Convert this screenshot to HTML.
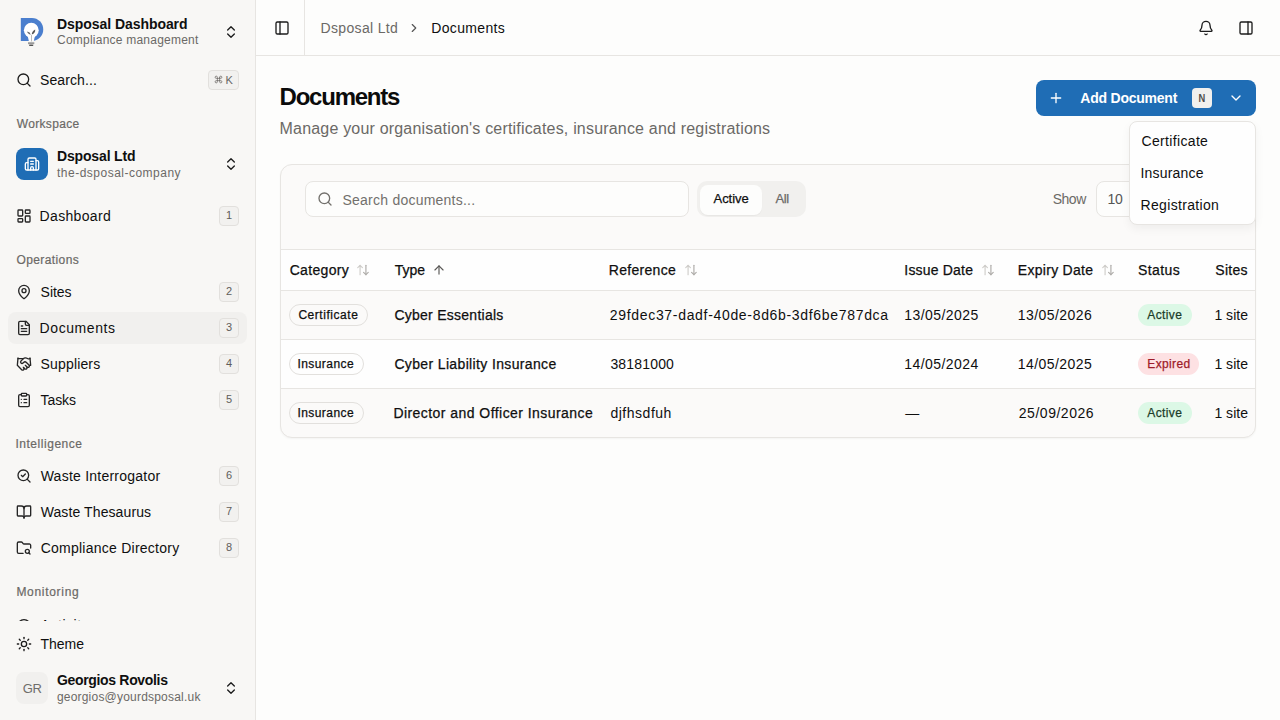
<!DOCTYPE html>
<html><head><meta charset="utf-8">
<style>
*{box-sizing:border-box;margin:0;padding:0}
html,body{width:1280px;height:720px;overflow:hidden;background:#fdfdfc;font-family:"Liberation Sans",sans-serif;color:#0f0f0f}
.t{position:absolute;white-space:nowrap;line-height:normal}
.b{position:absolute}
.ic{position:absolute;display:block;fill:none;stroke:currentColor;stroke-linecap:round;stroke-linejoin:round}
</style></head><body>
<div class="b" style="left:0px;top:0px;width:255px;height:720px;background:#f8f7f5"></div>
<div class="b" style="left:255px;top:0px;width:1px;height:720px;background:#e7e5e2"></div>
<div class="b" style="left:256px;top:55px;width:1024px;height:1px;background:#e7e5e2"></div>
<div class="b" style="left:304px;top:0px;width:1px;height:55px;background:#e7e5e2"></div>
<svg class="ic" style="left:18px;top:15px" width="28" height="33" viewBox="0 0 28 33">
<path d="M2.8 3 H14 A11 11.2 0 0 1 14 25.9 H2.8 Z" fill="#4b7fce" stroke="none"/>
<circle cx="13.3" cy="15.2" r="7.4" fill="#fff" stroke="none"/>
<path d="M8.2 18.5 Q10.5 22 10.8 26 H15.8 Q16.2 22 18.4 18.5 Z" fill="#fff" stroke="none"/>
<path d="M10 27.2 h6.3 v1.8 q-3.2 1.4 -6.3 0z" fill="#9a9a9a" stroke="none"/>
<rect x="11.2" y="29.8" width="4" height="1.2" fill="#555" stroke="none"/>
<path d="M13.5 26 V20.5" stroke="#aaa" stroke-width="0.8"/>
<path d="M12.8 19.8 Q12.2 17.2 9.2 16.6 Q9.6 19.2 12.8 19.8Z" fill="#666" stroke="none"/>
<path d="M13.8 19.6 Q13.8 16.2 17.2 14.4 Q17.6 18.0 13.8 19.6Z" fill="#555" stroke="none"/>
</svg>
<svg class="ic" style="left:223px;top:24px;color:#1c1c1c;" width="16" height="16" viewBox="0 0 24 24" stroke-width="2"><path d="m7 15 5 5 5-5"/><path d="m7 9 5-5 5 5"/></svg>
<svg class="ic" style="left:16px;top:72px;color:#1c1c1c;" width="16" height="16" viewBox="0 0 24 24" stroke-width="2"><circle cx="11" cy="11" r="8"/><path d="m21 21-4.3-4.3"/></svg>
<div class="b" style="left:208px;top:70px;width:31px;height:20px;border:1px solid #e2e0dd;background:#f2f1ef;border-radius:4px"></div>
<svg class="ic" style="left:214.0px;top:75.0px;color:#5f5d5a;" width="9" height="9" viewBox="0 0 24 24" stroke-width="1.8"><path d="M15 6v12a3 3 0 1 0 3-3H6a3 3 0 1 0 3 3V6a3 3 0 1 0-3 3h12a3 3 0 1 0-3-3"/></svg>
<div class="t" style="left:225.5px;top:73.5px;font-size:11px;color:#666">K</div>
<div class="b" style="left:16px;top:148px;width:32px;height:32px;background:#1f6db5;border-radius:8px"></div>
<svg class="ic" style="left:24px;top:156px;color:#ffffff;" width="16" height="16" viewBox="0 0 24 24" stroke-width="2"><path d="M10 12h4"/><path d="M10 8h4"/><path d="M14 21v-3a2 2 0 0 0-4 0v3"/><path d="M6 10H4a2 2 0 0 0-2 2v7a2 2 0 0 0 2 2h16a2 2 0 0 0 2-2V9a2 2 0 0 0-2-2h-2"/><path d="M6 21V5a2 2 0 0 1 2-2h8a2 2 0 0 1 2 2v16"/></svg>
<svg class="ic" style="left:223px;top:156px;color:#1c1c1c;" width="16" height="16" viewBox="0 0 24 24" stroke-width="2"><path d="m7 15 5 5 5-5"/><path d="m7 9 5-5 5 5"/></svg>
<div class="b" style="left:8px;top:312px;width:239px;height:32px;background:#f1f0ee;border-radius:8px"></div>
<svg class="ic" style="left:16px;top:208px;color:#262626;" width="16" height="16" viewBox="0 0 24 24" stroke-width="2"><rect width="7" height="9" x="3" y="3" rx="1"/><rect width="7" height="5" x="14" y="3" rx="1"/><rect width="7" height="9" x="14" y="12" rx="1"/><rect width="7" height="5" x="3" y="16" rx="1"/></svg>
<div class="b" style="left:219px;top:206px;width:20px;height:20px;border:1px solid #e2e0dd;background:#f2f1ef;border-radius:4px"></div>
<div class="t" style="left:219px;top:209px;width:20px;text-align:center;font-size:11px;color:#5f5d5a">1</div>
<svg class="ic" style="left:16px;top:284px;color:#262626;" width="16" height="16" viewBox="0 0 24 24" stroke-width="2"><path d="M20 10c0 4.993-5.539 10.193-7.399 11.799a1 1 0 0 1-1.202 0C9.539 20.193 4 14.993 4 10a8 8 0 0 1 16 0"/><circle cx="12" cy="10" r="3"/></svg>
<div class="b" style="left:219px;top:282px;width:20px;height:20px;border:1px solid #e2e0dd;background:#f2f1ef;border-radius:4px"></div>
<div class="t" style="left:219px;top:285px;width:20px;text-align:center;font-size:11px;color:#5f5d5a">2</div>
<svg class="ic" style="left:16px;top:320px;color:#262626;" width="16" height="16" viewBox="0 0 24 24" stroke-width="2"><path d="M15 2H6a2 2 0 0 0-2 2v16a2 2 0 0 0 2 2h12a2 2 0 0 0 2-2V7Z"/><path d="M14 2v4a2 2 0 0 0 2 2h4"/><path d="M10 9H8"/><path d="M16 13H8"/><path d="M16 17H8"/></svg>
<div class="b" style="left:219px;top:318px;width:20px;height:20px;border:1px solid #e2e0dd;background:#f2f1ef;border-radius:4px"></div>
<div class="t" style="left:219px;top:321px;width:20px;text-align:center;font-size:11px;color:#5f5d5a">3</div>
<svg class="ic" style="left:16px;top:356px;color:#262626;" width="16" height="16" viewBox="0 0 24 24" stroke-width="2"><path d="m11 17 2 2a1 1 0 1 0 3-3"/><path d="m14 14 2.5 2.5a1 1 0 1 0 3-3l-3.88-3.88a3 3 0 0 0-4.24 0l-.88.88a1 1 0 1 1-3-3l2.81-2.81a5.79 5.79 0 0 1 7.06-.87l.47.28a2 2 0 0 0 1.42.25L21 4"/><path d="m21 3 1 11h-2"/><path d="M3 3 2 14l6.5 6.5a1 1 0 1 0 3-3"/><path d="M3 4h8"/></svg>
<div class="b" style="left:219px;top:354px;width:20px;height:20px;border:1px solid #e2e0dd;background:#f2f1ef;border-radius:4px"></div>
<div class="t" style="left:219px;top:357px;width:20px;text-align:center;font-size:11px;color:#5f5d5a">4</div>
<svg class="ic" style="left:16px;top:392px;color:#262626;" width="16" height="16" viewBox="0 0 24 24" stroke-width="2"><rect width="8" height="4" x="8" y="2" rx="1" ry="1"/><path d="M16 4h2a2 2 0 0 1 2 2v14a2 2 0 0 1-2 2H6a2 2 0 0 1-2-2V6a2 2 0 0 1 2-2h2"/><path d="M12 11h4"/><path d="M12 16h4"/><path d="M8 11h.01"/><path d="M8 16h.01"/></svg>
<div class="b" style="left:219px;top:390px;width:20px;height:20px;border:1px solid #e2e0dd;background:#f2f1ef;border-radius:4px"></div>
<div class="t" style="left:219px;top:393px;width:20px;text-align:center;font-size:11px;color:#5f5d5a">5</div>
<svg class="ic" style="left:16px;top:468px;color:#262626;" width="16" height="16" viewBox="0 0 24 24" stroke-width="2"><path d="m8 11 2 2 4-4"/><circle cx="11" cy="11" r="8"/><path d="m21 21-4.3-4.3"/></svg>
<div class="b" style="left:219px;top:466px;width:20px;height:20px;border:1px solid #e2e0dd;background:#f2f1ef;border-radius:4px"></div>
<div class="t" style="left:219px;top:469px;width:20px;text-align:center;font-size:11px;color:#5f5d5a">6</div>
<svg class="ic" style="left:16px;top:504px;color:#262626;" width="16" height="16" viewBox="0 0 24 24" stroke-width="2"><path d="M12 7v14"/><path d="M3 18a1 1 0 0 1-1-1V4a1 1 0 0 1 1-1h5a4 4 0 0 1 4 4 4 4 0 0 1 4-4h5a1 1 0 0 1 1 1v13a1 1 0 0 1-1 1h-6a3 3 0 0 0-3 3 3 3 0 0 0-3-3z"/></svg>
<div class="b" style="left:219px;top:502px;width:20px;height:20px;border:1px solid #e2e0dd;background:#f2f1ef;border-radius:4px"></div>
<div class="t" style="left:219px;top:505px;width:20px;text-align:center;font-size:11px;color:#5f5d5a">7</div>
<svg class="ic" style="left:16px;top:540px;color:#262626;" width="16" height="16" viewBox="0 0 24 24" stroke-width="2"><circle cx="17" cy="17" r="3"/><path d="M10.7 20H4a2 2 0 0 1-2-2V5a2 2 0 0 1 2-2h3.9a2 2 0 0 1 1.69.9l.81 1.2a2 2 0 0 0 1.67.9H20a2 2 0 0 1 2 2v4.1"/><path d="m21 21-1.9-1.9"/></svg>
<div class="b" style="left:219px;top:538px;width:20px;height:20px;border:1px solid #e2e0dd;background:#f2f1ef;border-radius:4px"></div>
<div class="t" style="left:219px;top:541px;width:20px;text-align:center;font-size:11px;color:#5f5d5a">8</div>
<svg class="ic" style="left:16px;top:617.5px;color:#1c1c1c;" width="16" height="16" viewBox="0 0 24 24" stroke-width="2"><circle cx="12" cy="12" r="9.5"/></svg>
<div class="t" style="left:57.00px;top:16.00px;font-size:14px;color:#0f0f0f;font-weight:bold;letter-spacing:-0.058px;">Dsposal Dashboard</div>
<div class="t" style="left:57.00px;top:33.40px;font-size:12px;color:#6b6966;letter-spacing:0.230px;">Compliance management</div>
<div class="t" style="left:40.00px;top:72.00px;font-size:14px;color:#0f0f0f;letter-spacing:0.108px;">Search...</div>
<div class="t" style="left:16.75px;top:116.50px;font-size:12px;color:#6b6966;-webkit-text-stroke:0.2px #6b6966;letter-spacing:0.328px;">Workspace</div>
<div class="t" style="left:57.00px;top:148.00px;font-size:14px;color:#0f0f0f;font-weight:bold;letter-spacing:-0.157px;">Dsposal Ltd</div>
<div class="t" style="left:57.00px;top:165.90px;font-size:12px;color:#6b6966;letter-spacing:0.493px;">the-dsposal-company</div>
<div class="t" style="left:39.60px;top:208.00px;font-size:14px;color:#0f0f0f;letter-spacing:0.337px;">Dashboard</div>
<div class="t" style="left:16.50px;top:252.50px;font-size:12px;color:#6b6966;-webkit-text-stroke:0.2px #6b6966;letter-spacing:0.395px;">Operations</div>
<div class="t" style="left:40.60px;top:284.25px;font-size:14px;color:#0f0f0f;letter-spacing:-0.031px;">Sites</div>
<div class="t" style="left:39.60px;top:319.75px;font-size:14px;color:#0f0f0f;letter-spacing:0.574px;">Documents</div>
<div class="t" style="left:40.60px;top:356.10px;font-size:14px;color:#0f0f0f;letter-spacing:0.154px;">Suppliers</div>
<div class="t" style="left:40.60px;top:391.70px;font-size:14px;color:#0f0f0f;letter-spacing:-0.097px;">Tasks</div>
<div class="t" style="left:15.40px;top:436.80px;font-size:12px;color:#6b6966;-webkit-text-stroke:0.2px #6b6966;letter-spacing:0.538px;">Intelligence</div>
<div class="t" style="left:40.70px;top:468.10px;font-size:14px;color:#0f0f0f;letter-spacing:0.238px;">Waste Interrogator</div>
<div class="t" style="left:40.70px;top:504.00px;font-size:14px;color:#0f0f0f;letter-spacing:0.101px;">Waste Thesaurus</div>
<div class="t" style="left:40.70px;top:540.10px;font-size:14px;color:#0f0f0f;letter-spacing:0.246px;">Compliance Directory</div>
<div class="t" style="left:16.40px;top:585.10px;font-size:12px;color:#6b6966;-webkit-text-stroke:0.2px #6b6966;letter-spacing:0.700px;">Monitoring</div>
<div class="t" style="left:40.60px;top:616.50px;font-size:14px;color:#0f0f0f;letter-spacing:0.523px;">Activity</div>
<div class="b" style="left:0px;top:620.5px;width:255px;height:99.5px;background:#f8f7f5"></div>
<svg class="ic" style="left:16px;top:636px;color:#1c1c1c;" width="16" height="16" viewBox="0 0 24 24" stroke-width="2"><circle cx="12" cy="12" r="4"/><path d="M12 2v2"/><path d="M12 20v2"/><path d="m4.93 4.93 1.41 1.41"/><path d="m17.66 17.66 1.41 1.41"/><path d="M2 12h2"/><path d="M20 12h2"/><path d="m6.34 17.66-1.41 1.41"/><path d="m19.07 4.93-1.41 1.41"/></svg>
<div class="b" style="left:16px;top:672px;width:32px;height:32px;background:#f1f0ee;border-radius:8px"></div>
<svg class="ic" style="left:223px;top:680px;color:#1c1c1c;" width="16" height="16" viewBox="0 0 24 24" stroke-width="2"><path d="m7 15 5 5 5-5"/><path d="m7 9 5-5 5 5"/></svg>
<div class="t" style="left:40.50px;top:635.70px;font-size:14px;color:#0f0f0f;letter-spacing:-0.022px;">Theme</div>
<div class="t" style="left:22.80px;top:680.80px;font-size:13px;color:#6f6d6a;letter-spacing:-0.412px;">GR</div>
<div class="t" style="left:56.90px;top:672.00px;font-size:14px;color:#0f0f0f;font-weight:bold;letter-spacing:-0.322px;">Georgios Rovolis</div>
<div class="t" style="left:56.90px;top:689.90px;font-size:12px;color:#6b6966;letter-spacing:0.208px;">georgios@yourdsposal.uk</div>
<svg class="ic" style="left:274px;top:20px;color:#1c1c1c;" width="16" height="16" viewBox="0 0 24 24" stroke-width="2"><rect width="18" height="18" x="3" y="3" rx="2"/><path d="M9 3v18"/></svg>
<svg class="ic" style="left:406.8px;top:21px;color:#555555;" width="14" height="14" viewBox="0 0 24 24" stroke-width="2"><path d="m9 18 6-6-6-6"/></svg>
<svg class="ic" style="left:1198px;top:20px;color:#1c1c1c;" width="16" height="16" viewBox="0 0 24 24" stroke-width="2"><path d="M10.268 21a2 2 0 0 0 3.464 0"/><path d="M3.262 15.326A1 1 0 0 0 4 17h16a1 1 0 0 0 .74-1.673C19.41 13.956 18 12.499 18 8A6 6 0 0 0 6 8c0 4.499-1.411 5.956-2.738 7.326"/></svg>
<svg class="ic" style="left:1238px;top:20px;color:#1c1c1c;" width="16" height="16" viewBox="0 0 24 24" stroke-width="2"><rect width="18" height="18" x="3" y="3" rx="2"/><path d="M15 3v18"/></svg>
<div class="b" style="left:1036px;top:80px;width:220px;height:36px;background:#1f6db5;border-radius:8px"></div>
<svg class="ic" style="left:1048px;top:90px;color:#ffffff;" width="16" height="16" viewBox="0 0 24 24" stroke-width="2"><path d="M5 12h14"/><path d="M12 5v14"/></svg>
<div class="b" style="left:1192px;top:88px;width:20px;height:20px;background:#f1f0ee;border-radius:4px"></div>
<div class="t" style="left:1192px;top:92px;width:20px;text-align:center;font-size:11px;color:#4f4d4a;font-weight:bold;transform:scaleX(0.85)">N</div>
<svg class="ic" style="left:1228px;top:90px;color:#ffffff;" width="16" height="16" viewBox="0 0 24 24" stroke-width="2"><path d="m6 9 6 6 6-6"/></svg>
<div class="b" style="left:280px;top:164px;width:976px;height:274px;border:1px solid #e7e5e2;border-radius:12px;overflow:hidden;background:#fbfaf9;box-shadow:0 1px 2px rgba(0,0,0,0.04)"></div>
<div class="b" style="left:281px;top:250px;width:974px;height:40px;background:#fefefe"></div>
<div class="b" style="left:281px;top:249px;width:974px;height:1px;background:#e7e5e2"></div>
<div class="b" style="left:281px;top:290px;width:974px;height:1px;background:#e7e5e2"></div>
<div class="b" style="left:281px;top:340px;width:974px;height:48px;background:#fefefe"></div>
<div class="b" style="left:281px;top:339px;width:974px;height:1px;background:#e7e5e2"></div>
<div class="b" style="left:281px;top:388px;width:974px;height:1px;background:#e7e5e2"></div>
<div class="b" style="left:305px;top:181px;width:384px;height:36px;border:1px solid #e7e5e2;border-radius:8px;background:#fdfdfc"></div>
<svg class="ic" style="left:317px;top:191px;color:#72706c;" width="16" height="16" viewBox="0 0 24 24" stroke-width="2"><circle cx="11" cy="11" r="8"/><path d="m21 21-4.3-4.3"/></svg>
<div class="b" style="left:697px;top:181px;width:109px;height:36px;background:#f1f0ee;border-radius:10px"></div>
<div class="b" style="left:700px;top:185px;width:62px;height:30px;background:#fdfdfc;border-radius:8px;box-shadow:0 1px 1px rgba(0,0,0,0.04)"></div>
<div class="b" style="left:1096px;top:181px;width:120px;height:36px;border:1px solid #e7e5e2;border-radius:8px;background:#fdfdfc"></div>
<svg class="ic" style="left:356px;top:263.3px;color:#cfcdca;" width="14" height="14" viewBox="0 0 24 24" stroke-width="2"><path d="m3 8 4-4 4 4"/><path d="M7 4v16"/></svg>
<svg class="ic" style="left:356px;top:263.3px;color:#aeaca9;" width="14" height="14" viewBox="0 0 24 24" stroke-width="2"><path d="m21 16-4 4-4-4"/><path d="M17 20V4"/></svg>
<svg class="ic" style="left:684px;top:263.3px;color:#cfcdca;" width="14" height="14" viewBox="0 0 24 24" stroke-width="2"><path d="m3 8 4-4 4 4"/><path d="M7 4v16"/></svg>
<svg class="ic" style="left:684px;top:263.3px;color:#aeaca9;" width="14" height="14" viewBox="0 0 24 24" stroke-width="2"><path d="m21 16-4 4-4-4"/><path d="M17 20V4"/></svg>
<svg class="ic" style="left:981px;top:263.3px;color:#cfcdca;" width="14" height="14" viewBox="0 0 24 24" stroke-width="2"><path d="m3 8 4-4 4 4"/><path d="M7 4v16"/></svg>
<svg class="ic" style="left:981px;top:263.3px;color:#aeaca9;" width="14" height="14" viewBox="0 0 24 24" stroke-width="2"><path d="m21 16-4 4-4-4"/><path d="M17 20V4"/></svg>
<svg class="ic" style="left:1101px;top:263.3px;color:#cfcdca;" width="14" height="14" viewBox="0 0 24 24" stroke-width="2"><path d="m3 8 4-4 4 4"/><path d="M7 4v16"/></svg>
<svg class="ic" style="left:1101px;top:263.3px;color:#aeaca9;" width="14" height="14" viewBox="0 0 24 24" stroke-width="2"><path d="m21 16-4 4-4-4"/><path d="M17 20V4"/></svg>
<svg class="ic" style="left:431.6px;top:263.3px;color:#5a5856;" width="14" height="14" viewBox="0 0 24 24" stroke-width="2"><path d="m5 12 7-7 7 7"/><path d="M12 19V5"/></svg>
<div class="b" style="left:289px;top:304px;width:79px;height:22px;border:1px solid #e2e0dd;border-radius:11px"></div>
<div class="b" style="left:289px;top:353px;width:75px;height:22px;border:1px solid #e2e0dd;border-radius:11px"></div>
<div class="b" style="left:289px;top:402px;width:75px;height:22px;border:1px solid #e2e0dd;border-radius:11px"></div>
<div class="b" style="left:1138px;top:304px;width:54px;height:22px;background:#dcf8e6;border-radius:11px"></div>
<div class="b" style="left:1138px;top:353px;width:61px;height:22px;background:#fde1e3;border-radius:11px"></div>
<div class="b" style="left:1138px;top:402px;width:54px;height:22px;background:#dcf8e6;border-radius:11px"></div>
<div class="t" style="left:320.60px;top:19.70px;font-size:14px;color:#6b6966;letter-spacing:0.326px;">Dsposal Ltd</div>
<div class="t" style="left:431.20px;top:19.70px;font-size:14px;color:#0f0f0f;letter-spacing:0.349px;">Documents</div>
<div class="t" style="left:279.60px;top:82.70px;font-size:24px;color:#0b0b0b;font-weight:bold;letter-spacing:-1.242px;">Documents</div>
<div class="t" style="left:279.60px;top:120.00px;font-size:16px;color:#6b6966;letter-spacing:0.187px;">Manage your organisation's certificates, insurance and registrations</div>
<div class="t" style="left:1080.30px;top:89.90px;font-size:14px;color:#ffffff;font-weight:bold;letter-spacing:-0.226px;">Add Document</div>
<div class="t" style="left:342.50px;top:191.80px;font-size:14px;color:#72706c;letter-spacing:0.233px;">Search documents...</div>
<div class="t" style="left:713.50px;top:191.00px;font-size:13px;color:#0f0f0f;-webkit-text-stroke:0.25px #0f0f0f;letter-spacing:-0.034px;">Active</div>
<div class="t" style="left:775.60px;top:191.00px;font-size:13px;color:#6b6966;-webkit-text-stroke:0.25px #6b6966;letter-spacing:-0.505px;">All</div>
<div class="t" style="left:1052.70px;top:190.90px;font-size:14px;color:#6b6966;letter-spacing:-0.470px;">Show</div>
<div class="t" style="left:1107.60px;top:190.90px;font-size:14px;color:#555;letter-spacing:-0.286px;">10</div>
<div class="t" style="left:289.70px;top:262.00px;font-size:14px;color:#0f0f0f;-webkit-text-stroke:0.25px #0f0f0f;letter-spacing:0.320px;">Category</div>
<div class="t" style="left:394.80px;top:262.00px;font-size:14px;color:#0f0f0f;-webkit-text-stroke:0.25px #0f0f0f;">Type</div>
<div class="t" style="left:608.80px;top:262.00px;font-size:14px;color:#0f0f0f;-webkit-text-stroke:0.25px #0f0f0f;letter-spacing:0.293px;">Reference</div>
<div class="t" style="left:904.30px;top:262.00px;font-size:14px;color:#0f0f0f;-webkit-text-stroke:0.25px #0f0f0f;letter-spacing:0.190px;">Issue Date</div>
<div class="t" style="left:1017.80px;top:262.00px;font-size:14px;color:#0f0f0f;-webkit-text-stroke:0.25px #0f0f0f;letter-spacing:0.288px;">Expiry Date</div>
<div class="t" style="left:1138.10px;top:262.00px;font-size:14px;color:#0f0f0f;-webkit-text-stroke:0.25px #0f0f0f;letter-spacing:0.392px;">Status</div>
<div class="t" style="left:1215.30px;top:262.00px;font-size:14px;color:#0f0f0f;-webkit-text-stroke:0.25px #0f0f0f;letter-spacing:0.281px;">Sites</div>
<div class="t" style="left:298.40px;top:308.20px;font-size:12px;color:#0f0f0f;-webkit-text-stroke:0.25px #0f0f0f;letter-spacing:0.541px;">Certificate</div>
<div class="t" style="left:394.40px;top:306.70px;font-size:14px;color:#0f0f0f;-webkit-text-stroke:0.25px #0f0f0f;letter-spacing:0.261px;">Cyber Essentials</div>
<div class="t" style="left:609.80px;top:306.70px;font-size:14px;color:#0f0f0f;letter-spacing:0.678px;">29fdec37-dadf-40de-8d6b-3df6be787dca</div>
<div class="t" style="left:904.30px;top:306.70px;font-size:14px;color:#0f0f0f;letter-spacing:0.435px;">13/05/2025</div>
<div class="t" style="left:1017.80px;top:306.70px;font-size:14px;color:#0f0f0f;letter-spacing:0.435px;">13/05/2026</div>
<div class="t" style="left:1147.30px;top:308.20px;font-size:12px;color:#1c3d2a;-webkit-text-stroke:0.25px #1c3d2a;letter-spacing:0.389px;">Active</div>
<div class="t" style="left:1214.40px;top:306.70px;font-size:14px;color:#0f0f0f;letter-spacing:0.025px;">1 site</div>
<div class="t" style="left:297.40px;top:357.30px;font-size:12px;color:#0f0f0f;-webkit-text-stroke:0.25px #0f0f0f;letter-spacing:0.441px;">Insurance</div>
<div class="t" style="left:394.40px;top:355.80px;font-size:14px;color:#0f0f0f;-webkit-text-stroke:0.25px #0f0f0f;letter-spacing:0.356px;">Cyber Liability Insurance</div>
<div class="t" style="left:610.40px;top:355.80px;font-size:14px;color:#0f0f0f;letter-spacing:0.171px;">38181000</div>
<div class="t" style="left:904.30px;top:355.80px;font-size:14px;color:#0f0f0f;letter-spacing:0.435px;">14/05/2024</div>
<div class="t" style="left:1017.80px;top:355.80px;font-size:14px;color:#0f0f0f;letter-spacing:0.435px;">14/05/2025</div>
<div class="t" style="left:1147.30px;top:357.30px;font-size:12px;color:#9e1c2a;-webkit-text-stroke:0.25px #9e1c2a;letter-spacing:0.356px;">Expired</div>
<div class="t" style="left:1214.40px;top:355.80px;font-size:14px;color:#0f0f0f;letter-spacing:0.025px;">1 site</div>
<div class="t" style="left:297.40px;top:406.10px;font-size:12px;color:#0f0f0f;-webkit-text-stroke:0.25px #0f0f0f;letter-spacing:0.441px;">Insurance</div>
<div class="t" style="left:393.40px;top:404.60px;font-size:14px;color:#0f0f0f;-webkit-text-stroke:0.25px #0f0f0f;letter-spacing:0.445px;">Director and Officer Insurance</div>
<div class="t" style="left:610.40px;top:404.60px;font-size:14px;color:#0f0f0f;letter-spacing:0.521px;">djfhsdfuh</div>
<div class="t" style="left:905.30px;top:404.60px;font-size:14px;color:#0f0f0f;">—</div>
<div class="t" style="left:1018.80px;top:404.60px;font-size:14px;color:#0f0f0f;letter-spacing:0.524px;">25/09/2026</div>
<div class="t" style="left:1147.30px;top:406.10px;font-size:12px;color:#1c3d2a;-webkit-text-stroke:0.25px #1c3d2a;letter-spacing:0.389px;">Active</div>
<div class="t" style="left:1214.40px;top:404.60px;font-size:14px;color:#0f0f0f;letter-spacing:0.025px;">1 site</div>
<div class="b" style="left:1128.5px;top:121px;width:127.5px;height:104px;border:1px solid #e7e5e2;border-radius:8px;background:#fefefe;box-shadow:0 4px 10px rgba(0,0,0,0.05)"></div>
<div class="t" style="left:1141.50px;top:132.75px;font-size:14px;color:#0f0f0f;letter-spacing:0.337px;">Certificate</div>
<div class="t" style="left:1140.50px;top:165.00px;font-size:14px;color:#0f0f0f;letter-spacing:0.194px;">Insurance</div>
<div class="t" style="left:1140.50px;top:196.90px;font-size:14px;color:#0f0f0f;letter-spacing:0.335px;">Registration</div>
</body></html>
